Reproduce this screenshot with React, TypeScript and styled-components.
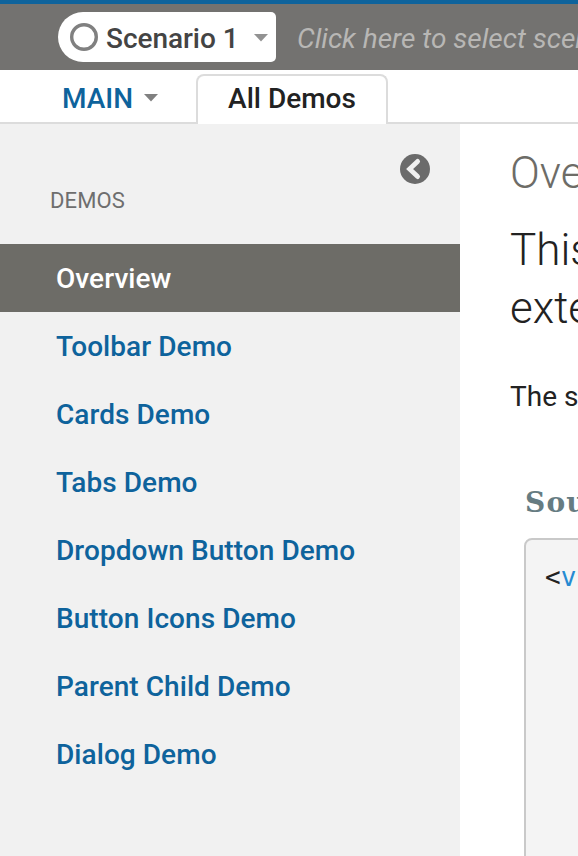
import React, { useState } from "react";
import styled, { createGlobalStyle } from "styled-components";

const GlobalStyle = createGlobalStyle`
  *, *::before, *::after { box-sizing: border-box; }
  html, body { margin: 0; height: 100%; overflow: hidden; }
  body {
    background: #fff;
    color: #222;
    font-family: Roboto, "Liberation Sans", sans-serif;
    font-size: 28px;
  }
  button { font: inherit; border: 0; margin: 0; padding: 0; background: none; cursor: pointer; }
`;

const Page = styled.div`
  display: flex;
  flex-direction: column;
  height: 100vh;
  overflow: hidden;
`;

const ScenarioBar = styled.header`
  display: flex;
  align-items: flex-start;
  flex: none;
  height: 70px;
  padding: 8px 0 0 58px;
  border-top: 4px solid #0e639c;
  background: #737270;
  white-space: nowrap;
`;

const ScenarioButton = styled.button`
  display: flex;
  align-items: center;
  flex: none;
  width: 218px;
  height: 50px;
  padding: 2px 8px 0 12px;
  border-radius: 25px 5px 5px 25px;
  background: #fff;
  color: #444;
  font-weight: 500;
  letter-spacing: -0.05px;
`;

const Ring = styled.svg`
  flex: none;
  width: 28px;
  height: 28px;
  margin: -2px 8px 0 0;
  fill: none;
  stroke: #808080;
  stroke-width: 3.4px;
`;

const Caret = styled.svg<{ $gap: string; $color: string }>`
  flex: none;
  width: 14px;
  height: 8px;
  margin-left: ${(p) => p.$gap};
  fill: ${(p) => p.$color};
`;

const ScenarioHint = styled.span`
  margin-left: 21px;
  color: #b8b7b5;
  font-style: italic;
  line-height: 53px;
`;

const TabBar = styled.nav`
  display: flex;
  align-items: flex-end;
  flex: none;
  height: 54px;
`;

const MainMenu = styled.button`
  display: flex;
  align-items: center;
  width: 196px;
  height: 54px;
  padding: 4px 0 0 62px;
  border-bottom: 2px solid #dcdcdc;
  color: #0e639c;
  font-weight: 500;
`;

const ActiveTab = styled.button`
  width: 192px;
  height: 50px;
  padding-bottom: 3px;
  border: 2px solid #dcdcdc;
  border-bottom: 0;
  border-radius: 8px 8px 0 0;
  color: #222;
  font-weight: 500;
`;

const TabFiller = styled.div`
  flex: 1;
  height: 2px;
  background: #dcdcdc;
`;

const Body = styled.div`
  display: flex;
  flex: 1;
  min-height: 0;
`;

const Sidebar = styled.aside`
  flex: none;
  width: 460px;
  background: #f1f1f1;
`;

const SidebarTop = styled.div`
  display: flex;
  justify-content: space-between;
  align-items: flex-start;
  height: 120px;
  padding: 30px 30px 0 50px;
`;

const SectionLabel = styled.span`
  margin-top: 34px;
  color: #6e6e6e;
  font-size: 22px;
  line-height: 26px;
  letter-spacing: 0.1px;
`;

const CollapseButton = styled.button`
  display: block;
  width: 30px;
  height: 30px;

  svg { display: block; }
`;

const DemoItem = styled.button<{ $active: boolean }>`
  display: block;
  width: 100%;
  height: 68px;
  padding: 1px 0 0 56px;
  background: ${(p) => (p.$active ? "#6d6c67" : "transparent")};
  color: ${(p) => (p.$active ? "#fff" : "#0e639c")};
  font-weight: 500;
  text-align: left;
  letter-spacing: 0.06px;
`;

const Content = styled.main`
  flex: none;
  width: 900px;
  padding: 20px 50px 0;
`;

const Title = styled.h1`
  margin: 0;
  color: #6d6c67;
  font-size: 44px;
  font-weight: 300;
  line-height: 58px;
`;

const Lead = styled.p`
  margin: 19px 0 0;
  font-size: 44px;
  font-weight: 300;
  line-height: 58px;
`;

const Note = styled.p`
  margin: 40px 0 0;
  line-height: 40px;
`;

const SourceTitle = styled.h2`
  margin: 66px 0 0 15px;
  color: #667c82;
  font-family: "DejaVu Serif", serif;
  font-size: 28px;
  line-height: 40px;
  font-weight: 700;
  letter-spacing: 1.2px;
`;

const CodeBox = styled.pre`
  height: 400px;
  margin: 15px 0 0 14px;
  padding: 18px 19px;
  border: 2px solid #c9c9c9;
  border-radius: 8px;
  background: #f4f4f4;
  font-family: "DejaVu Sans Mono", monospace;
  font-size: 26px;
  line-height: 38px;
`;

const TagName = styled.span`
  color: #268bd2;
`;

const demos = [
  "Overview",
  "Toolbar Demo",
  "Cards Demo",
  "Tabs Demo",
  "Dropdown Button Demo",
  "Button Icons Demo",
  "Parent Child Demo",
  "Dialog Demo",
];

function DownCaret({ gap, color }: { gap: string; color: string }) {
  return (
    <Caret $gap={gap} $color={color} viewBox="0 0 14 8">
      <path d="M0 0h14L7 7.5z" />
    </Caret>
  );
}

export default function App() {
  const [selected, setSelected] = useState("Overview");

  return (
    <Page>
      <GlobalStyle />
      <ScenarioBar>
        <ScenarioButton>
          <Ring viewBox="0 0 28 28">
            <circle cx="14" cy="14" r="12.3" />
          </Ring>
          Scenario 1
          <DownCaret gap="auto" color="#929292" />
        </ScenarioButton>
        <ScenarioHint>Click here to select scenarios</ScenarioHint>
      </ScenarioBar>
      <TabBar>
        <MainMenu>
          MAIN
          <DownCaret gap="11px" color="#808080" />
        </MainMenu>
        <ActiveTab>All Demos</ActiveTab>
        <TabFiller />
      </TabBar>
      <Body>
        <Sidebar>
          <SidebarTop>
            <SectionLabel>DEMOS</SectionLabel>
            <CollapseButton aria-label="Collapse sidebar">
              <svg width="30" height="30" viewBox="0 0 30 30">
                <circle cx="15" cy="15" r="15" fill="#6b6b6b" />
                <path
                  d="M17.6 7.4 9.6 15l8 7.6"
                  fill="none"
                  stroke="#f1f1f1"
                  strokeWidth="4.8"
                  strokeLinecap="round"
                  strokeLinejoin="miter"
                />
              </svg>
            </CollapseButton>
          </SidebarTop>
          {demos.map((name) => (
            <DemoItem key={name} $active={name === selected} onClick={() => setSelected(name)}>
              {name}
            </DemoItem>
          ))}
        </Sidebar>
        <Content>
          <Title>Overview</Title>
          <Lead>
            This
            <br />
            exte
          </Lead>
          <Note>The source</Note>
          <SourceTitle>Source</SourceTitle>
          <CodeBox>
            &lt;<TagName>vc</TagName>
          </CodeBox>
        </Content>
      </Body>
    </Page>
  );
}
